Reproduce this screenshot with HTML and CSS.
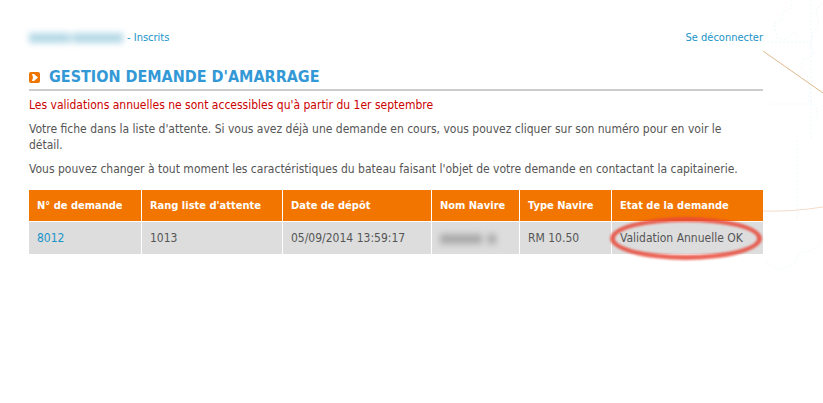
FILE: index.html
```
<!DOCTYPE html>
<html lang="fr">
<head>
    <meta charset="UTF-8">
    <meta name="viewport" content="width=device-width, initial-scale=1.0">
    <title>Gestion demande d'amarrage</title>
    <link rel="stylesheet" href="styles.css">
</head>
<body>
    <!-- fond : carte marine -->
    <svg class="chart" width="60" height="280" viewBox="0 0 60 280" fill="none" aria-hidden="true">
        <g stroke="#eef9fc" stroke-dasharray="2 2">
            <path d="M29 0l-2 9-8 3v8l-8 4 3 14 10 1 7-6 5 5"/>
            <path d="M58 3l-5 9 3 13-6 7-3 14 5 6-6 6-6 2-2 9 6 6 3 15-2 10 8 6 2 13"/>
            <path d="M48 0v140M0 42h48M8 104h40M34 140v80"/>
            <path d="M3 262l12 8 16-6 5-11 12-2 11-8"/>
        </g>
        <path d="M0 51l60 42" stroke="#dfb98c"/>
        <path d="M0 211q28 1 60-4" stroke="#f3dccb"/>
    </svg>

    <div class="container">
        <div class="topbar">
            <div class="user"><span class="masked masked-user"></span> - Inscrits</div>
            <a href="#">Se déconnecter</a>
        </div>

        <h1>
            <svg width="11" height="11" viewBox="0 0 11 11" aria-hidden="true">
                <rect width="11" height="11" rx="2" fill="#ee7500"/>
                <path d="M3 2h2l4 3.500-4 3.500h-2l1-3.500z" fill="#fff"/>
            </svg>
            GESTION DEMANDE D'AMARRAGE
        </h1>

        <p class="warning">Les validations annuelles ne sont accessibles qu'à partir du 1er septembre</p>
        <p>Votre fiche dans la liste d'attente. Si vous avez déjà une demande en cours, vous pouvez cliquer sur son numéro pour en voir le détail.</p>
        <p>Vous pouvez changer à tout moment les caractéristiques du bateau faisant l'objet de votre demande en contactant la capitainerie.</p>

        <div class="table-wrap">
            <table>
                <colgroup>
                    <col class="col-num">
                    <col class="col-rang">
                    <col class="col-date">
                    <col class="col-nom">
                    <col class="col-type">
                    <col class="col-etat">
                </colgroup>
                <thead>
                    <tr>
                        <th>N° de demande</th>
                        <th>Rang liste d'attente</th>
                        <th>Date de dépôt</th>
                        <th>Nom Navire</th>
                        <th>Type Navire</th>
                        <th>Etat de la demande</th>
                    </tr>
                </thead>
                <tbody>
                    <tr>
                        <td><a href="#">8012</a></td>
                        <td>1013</td>
                        <td>05/09/2014 13:59:17</td>
                        <td><span class="masked masked-boat"></span></td>
                        <td>RM 10.50</td>
                        <td>Validation Annuelle OK</td>
                    </tr>
                </tbody>
            </table>
            <div class="oval"></div>
        </div>
    </div>
</body>
</html>
```
FILE: styles.css
```
:root {
    --orange: #f27500;
    --blue: #3399d6;
    --link: #1994c8;
    --text: #555555;
}

* {
    margin: 0;
    padding: 0;
    box-sizing: border-box;
}

body {
    font-family: Tahoma, "DejaVu Sans Condensed", "DejaVu Sans", sans-serif;
    font-stretch: condensed;
    font-size: 12px;
    line-height: 16px;
    color: var(--text);
    background-color: #fff;
}

a {
    color: var(--link);
    text-decoration: none;
}

.container {
    margin: 0 60px 0 29px;
    padding: 30px 0;
}

.topbar {
    display: flex;
    justify-content: space-between;
    font-size: 11px;
    color: var(--link);
    margin-bottom: 21px;
}

.user {
    display: flex;
    align-items: center;
    gap: 4px;
}

.masked {
    display: inline-block;
    vertical-align: middle;
    height: 10px;
    filter: blur(3px);
}

.masked-user {
    width: 94px;
    background: linear-gradient(to right, #b4d9e6 40%, #d5e9f0 45%, #b4d9e6 50%);
}

.masked-boat {
    width: 56px;
    background: linear-gradient(to right, #aaa 74%, #ddd 76%, #ddd 84%, #aaa 86%);
}

h1 {
    display: flex;
    align-items: center;
    gap: 9px;
    font-size: 16px;
    line-height: 20px;
    color: var(--blue);
    border-bottom: 2px solid #ccc;
    padding-bottom: 2px;
    margin-bottom: 6px;
}

p {
    padding-right: 12px;
    margin-bottom: 8px;
}

.warning {
    color: #cc0000;
}

.table-wrap {
    position: relative;
    margin-top: 13px;
}

table {
    width: 100%;
    border-collapse: separate;
    border-spacing: 0;
    table-layout: fixed;
}

.col-num { width: 113px; }
.col-rang { width: 141px; }
.col-date { width: 149px; }
.col-nom { width: 88px; }
.col-type { width: 92px; }

th,
td {
    height: 32px;
    padding: 0 8px;
    text-align: left;
    white-space: nowrap;
    border-right: 1px solid #fff;
}

th:last-child,
td:last-child {
    border-right: none;
}

th {
    font-size: 11px;
    color: #fff;
    background-color: var(--orange);
    border-bottom: 1px solid #fff;
}

td {
    background-color: #ddd;
}

/* ovale rouge autour de l'état */
.oval {
    position: absolute;
    right: 1px;
    bottom: -6px;
    width: 152px;
    height: 43px;
    border: 5px solid #e8493a;
    border-radius: 50%;
    opacity: 0.85;
    filter: blur(1px);
}

.chart {
    position: absolute;
    right: 0;
    top: 0;
    z-index: -1;
}
```
